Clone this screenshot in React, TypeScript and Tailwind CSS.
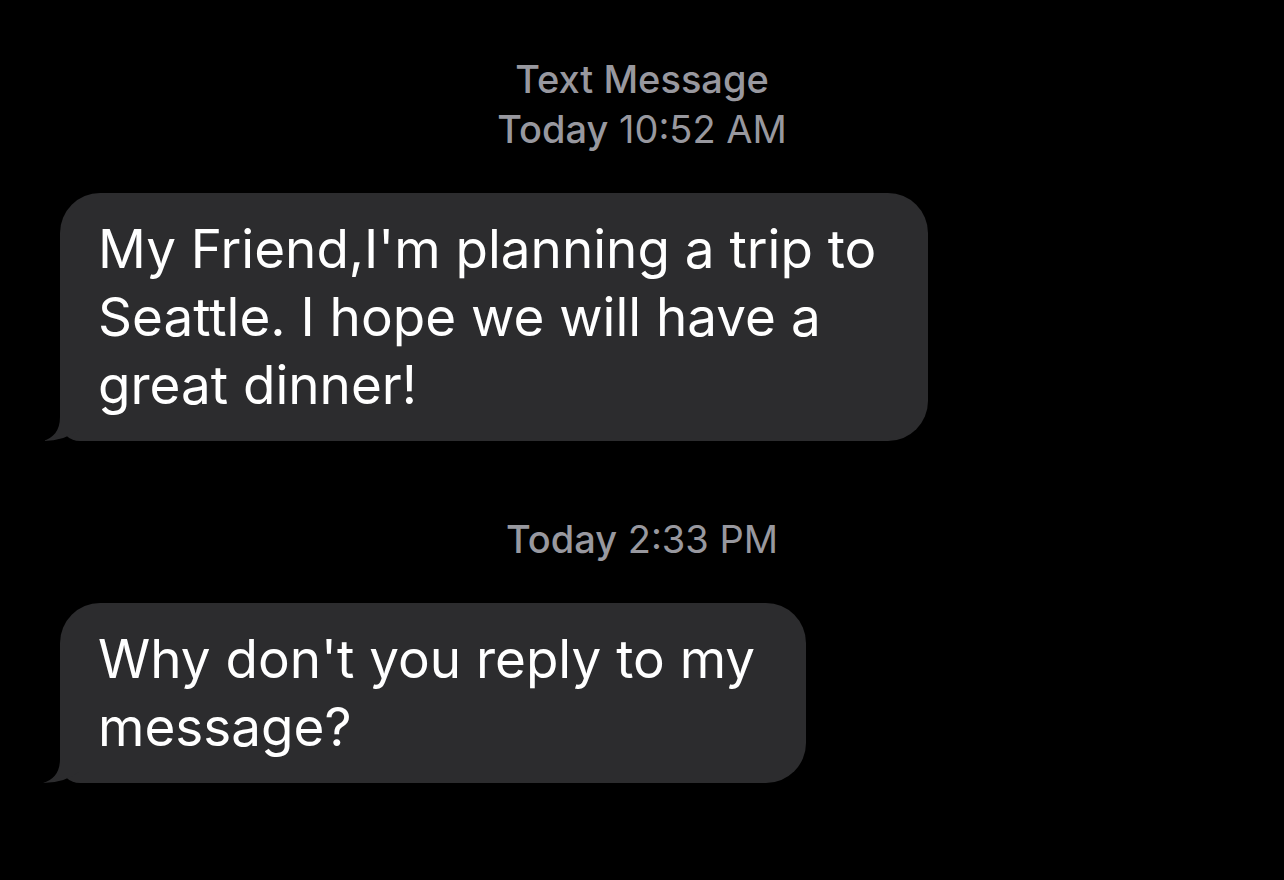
import React from "react";

interface BubbleProps {
  lines: string[];
  width: string;
}

function Tail() {
  return (
    <svg
      className="absolute -left-[17px] bottom-0 z-0"
      width="40"
      height="50"
      viewBox="0 0 40 50"
    >
      <path d="M17 0 L17 26 C17 40 10 47 0 50 Q22 50 37 38 L37 0 Z" fill="#2c2c2e" />
    </svg>
  );
}

function Bubble({ lines, width }: BubbleProps) {
  return (
    <div className={`relative ml-[60px] ${width} rounded-[40px] rounded-bl-[20px] bg-[#2c2c2e] py-[22px] pl-[38px]`}>
      <Tail />
      <div className="relative z-10 text-[53px] leading-[68px] text-white">
        {lines.map((l) => (
          <div key={l} className="whitespace-nowrap">
            {l}
          </div>
        ))}
      </div>
    </div>
  );
}

export default function App() {
  return (
    <div
      className="h-[880px] w-full bg-black overflow-hidden"
      style={{ fontFamily: "Inter, 'Noto Sans', sans-serif" }}
    >
      <div className="pt-[54px] text-center text-[38px] leading-[50px] text-[#98989f]">
        <div className="font-medium">Text Message</div>
        <div>
          <span className="font-medium">Today</span> 10:52 AM
        </div>
      </div>

      <div className="mt-[39px]">
        <Bubble
          width="w-[868px]"
          lines={["My Friend,I'm planning a trip to", "Seattle. I hope we will have a", "great dinner!"]}
        />
      </div>

      <div className="mt-[73px] text-center text-[38px] leading-[50px] text-[#98989f]">
        <span className="font-medium">Today</span> 2:33 PM
      </div>

      <div className="mt-[39px]">
        <Bubble width="w-[746px]" lines={["Why don't you reply to my", "message?"]} />
      </div>
    </div>
  );
}
